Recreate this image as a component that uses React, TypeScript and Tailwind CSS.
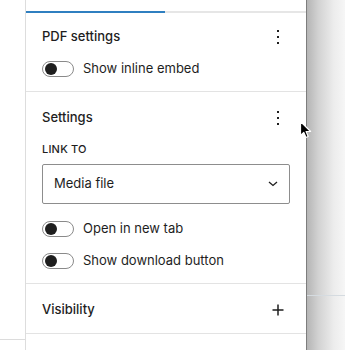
import React from "react";

function Toggle() {
  return (
    <div className="relative w-[32px] h-[16px] rounded-full border border-[#8a8a8a] bg-white shrink-0">
      <div className="absolute left-[2px] top-[1px] w-[12px] h-[12px] rounded-full bg-[#1e1e1e]" />
    </div>
  );
}

function Kebab() {
  return (
    <svg width="24" height="24" viewBox="0 0 24 24" className="shrink-0">
      <rect x="11" y="5" width="2" height="2" fill="#1e1e1e" />
      <rect x="11" y="11" width="2" height="2" fill="#1e1e1e" />
      <rect x="11" y="17" width="2" height="2" fill="#1e1e1e" />
    </svg>
  );
}

function Plus() {
  return (
    <svg width="24" height="24" viewBox="0 0 24 24" className="shrink-0">
      <path d="M12 6.5v11M6.5 12h11" stroke="#1e1e1e" strokeWidth="1.5" />
    </svg>
  );
}

export default function App() {
  return (
    <div
      className="relative w-[345px] h-[350px] overflow-hidden bg-white flex text-[#1e1e1e]"
      style={{ fontFamily: "Inter, 'Noto Sans', sans-serif" }}
    >
      {/* left strip */}
      <div className="w-[25px] shrink-0 flex flex-col">
        <div className="h-[339px]" />
        <div className="h-px bg-[#dcdcdc]" />
      </div>

      {/* panel */}
      <div className="w-[282px] shrink-0 border-l border-r border-l-[#dddddd] border-r-[#7d7d7d] flex flex-col">
        <div className="h-[11px]" />
        <div className="flex h-[2px]">
          <div className="w-[139px] bg-[#2f7fc0]" />
          <div className="flex-1 bg-[#e6e6e6]" />
        </div>

        {/* PDF settings */}
        <div className="px-[16px] pt-[12px] pb-[14px] border-b border-[#e3e3e3]">
          <div className="flex items-center justify-between h-[24px]">
            <span className="text-[13px] font-medium">PDF settings</span>
            <Kebab />
          </div>
          <div className="flex items-center gap-[9px] mt-[12px] h-[16px]">
            <Toggle />
            <span className="text-[13px]">Show inline embed</span>
          </div>
        </div>

        {/* Settings */}
        <div className="px-[16px] pt-[14px] pb-[14px] border-b border-[#e3e3e3]">
          <div className="flex items-center justify-between h-[24px]">
            <span className="text-[13px] font-medium">Settings</span>
            <Kebab />
          </div>
          <div className="mt-[11px] h-[16px] flex items-center text-[11px] font-medium uppercase tracking-[0.2px]">
            Link to
          </div>
          <div className="mt-[7px] h-[40px] w-[248px] border border-[#8d8d8d] rounded-[2px] flex items-center justify-between pl-[11px] pr-[11px]">
            <span className="text-[13px]">Media file</span>
            <svg width="10" height="6" viewBox="0 0 10 6">
              <path d="M1 1l4 3.5L9 1" fill="none" stroke="#1e1e1e" strokeWidth="1.3" />
            </svg>
          </div>
          <div className="flex items-center gap-[9px] mt-[17px] h-[16px]">
            <Toggle />
            <span className="text-[13px]">Open in new tab</span>
          </div>
          <div className="flex items-center gap-[9px] mt-[16px] h-[16px]">
            <Toggle />
            <span className="text-[13px]">Show download button</span>
          </div>
        </div>

        {/* Visibility */}
        <div className="px-[16px] pt-[14px] pb-[11px] border-b border-[#e3e3e3]">
          <div className="flex items-center justify-between h-[24px]">
            <span className="text-[13px] font-medium">Visibility</span>
            <Plus />
          </div>
        </div>
      </div>

      {/* right gradient */}
      <div className="flex-1 flex flex-col bg-[linear-gradient(to_right,#b5b5b5,#d2d2d2_30%,#ececec_70%,#f6f6f6)]">
        <div className="h-[295px]" />
        <div className="h-px bg-[#d5dbe0]" />
      </div>

      {/* cursor */}
      <svg
        className="absolute left-[299px] top-[120px]"
        width="14"
        height="20"
        viewBox="0 0 14 20"
      >
        <path
          d="M1.5 1.5v14l3.3-3.1 2.2 5.1 2.2-1-2.1-5h4.5z"
          fill="#000"
          stroke="#fff"
          strokeWidth="1.2"
          strokeLinejoin="round"
        />
      </svg>
    </div>
  );
}
